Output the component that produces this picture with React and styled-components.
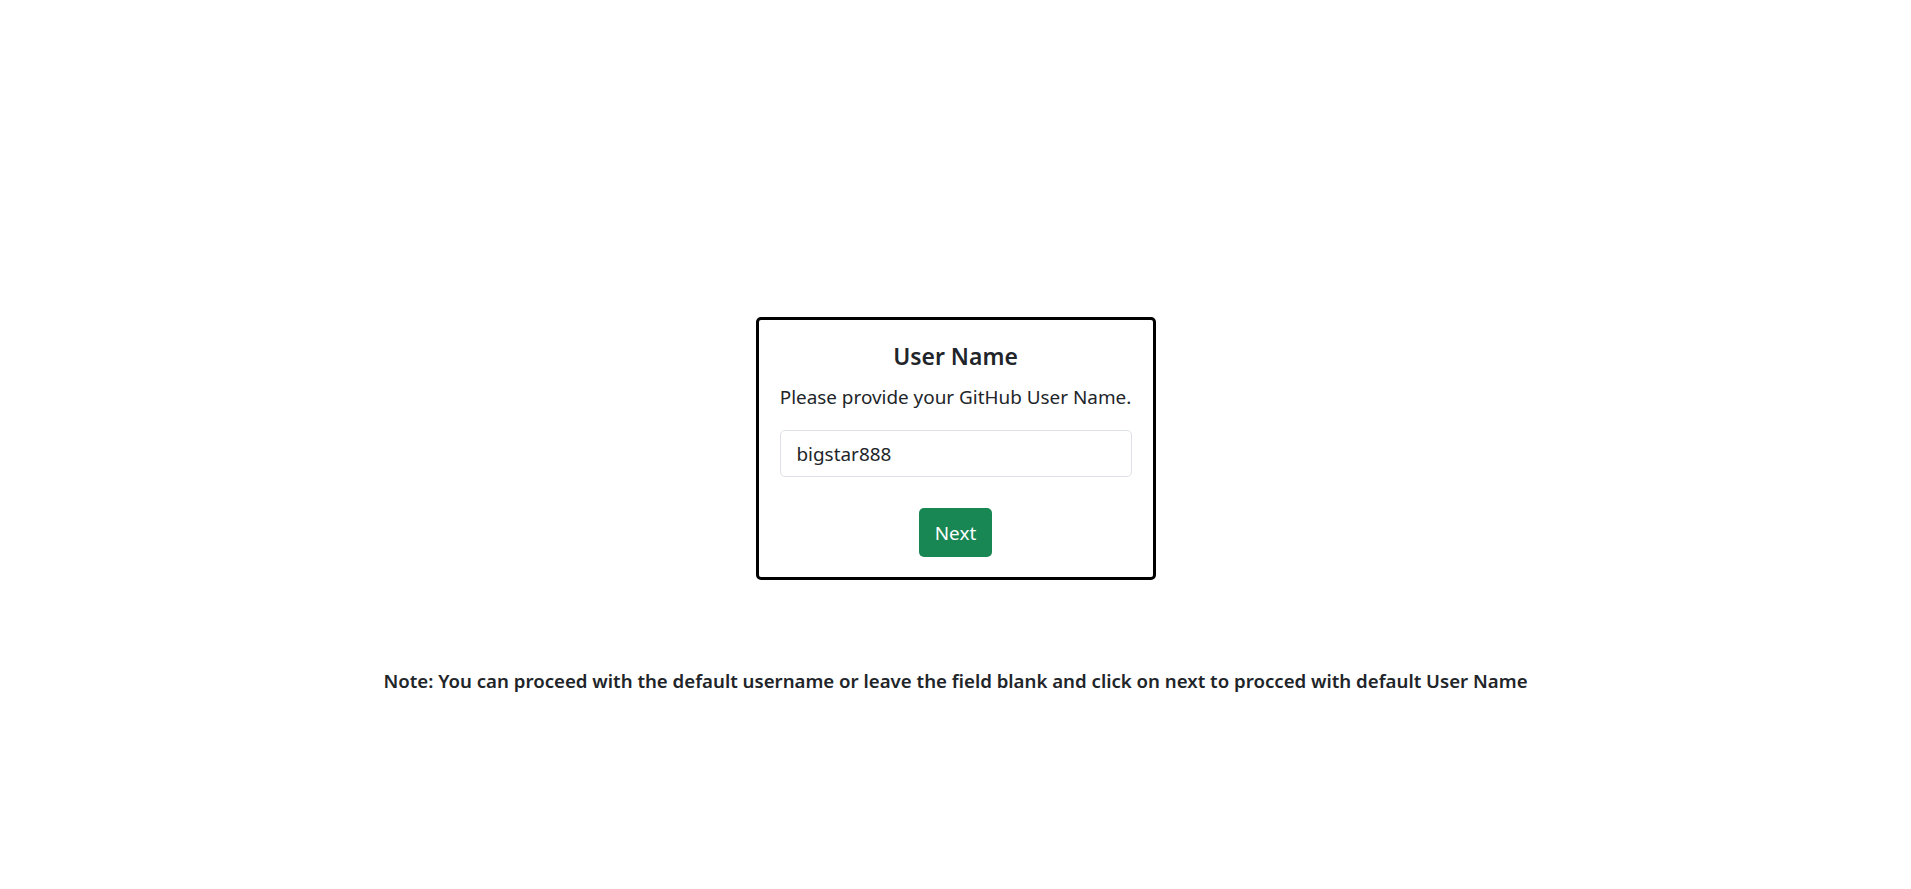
import styled, { createGlobalStyle } from 'styled-components'

const GlobalStyle = createGlobalStyle`
  body {
    margin: 0;
    background: #fff;
    color: #212529;
    font-family: "Noto Sans", "Open Sans", sans-serif;
  }
  * {
    box-sizing: border-box;
  }
`

const Page = styled.div`
  display: flex;
  flex-direction: column;
  align-items: center;
  min-height: 889px;
  padding-top: 317px;
`

const Card = styled.form`
  display: flex;
  flex-direction: column;
  align-items: center;
  width: 400px;
  border: 3px solid #000;
  border-radius: 5px;
  padding: 22px 21px 20px;
`

const Title = styled.h5`
  margin: 0 0 12px;
  font-size: 22.9px;
  font-weight: 600;
  line-height: 29px;
  color: #212529;
`

const Subtitle = styled.p`
  margin: 0 0 18px;
  font-size: 18.9px;
  line-height: 29px;
  color: #212529;
`

const Input = styled.input`
  width: 100%;
  height: 47px;
  padding: 0 16px;
  font-family: inherit;
  font-size: 18.9px;
  color: #212529;
  border: 1px solid #dee2e6;
  border-radius: 5px;
  outline: none;
`

const Button = styled.button`
  margin-top: 31px;
  height: 49px;
  padding: 0 16px;
  font-family: inherit;
  font-size: 18.9px;
  color: #fff;
  background: #198754;
  border: none;
  border-radius: 5px;
  cursor: pointer;
`

const Note = styled.p`
  margin: 86px 0 0;
  font-size: 18.65px;
  font-weight: 600;
  line-height: 29px;
  color: #212529;
`

const App = () => {
  return (
    <>
      <GlobalStyle />
      <Page>
        <Card onSubmit={(e) => e.preventDefault()}>
          <Title>User Name</Title>
          <Subtitle>Please provide your GitHub User Name.</Subtitle>
          <Input defaultValue="bigstar888" />
          <Button type="submit">Next</Button>
        </Card>
        <Note>
          Note: You can proceed with the default username or leave the field blank and click on next to procced with default User Name
        </Note>
      </Page>
    </>
  )
}

export default App
